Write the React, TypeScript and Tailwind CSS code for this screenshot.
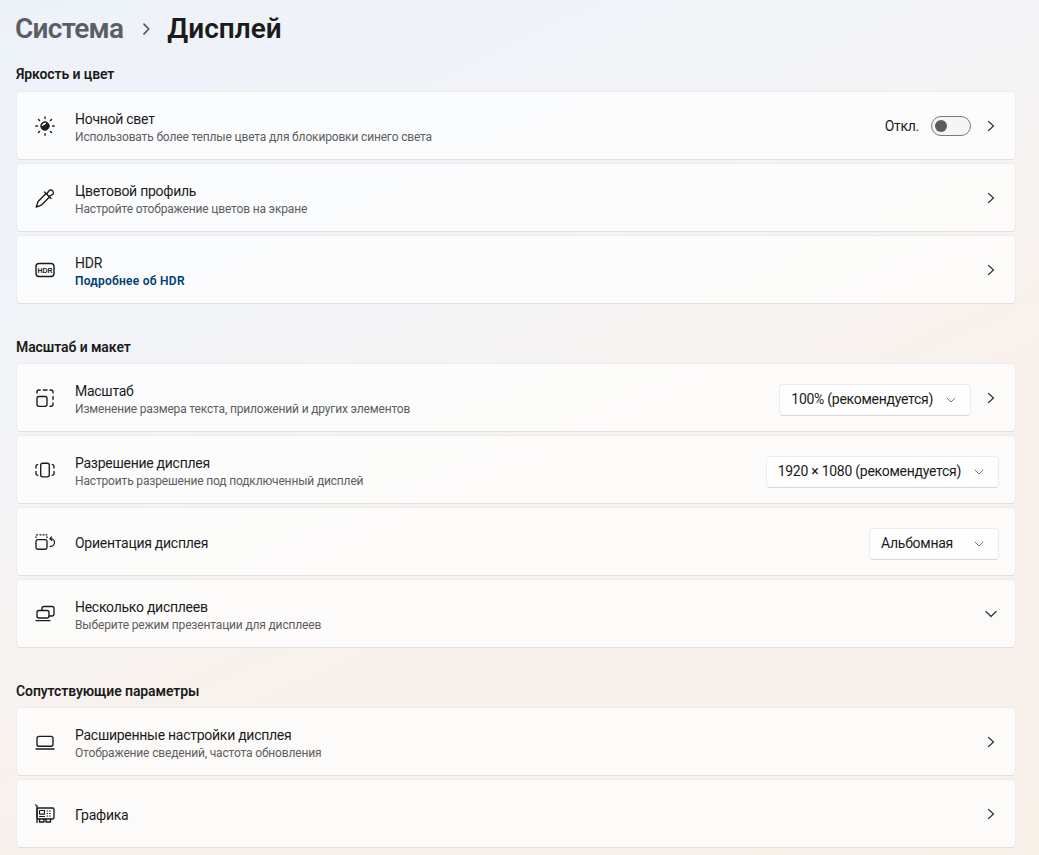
import React from "react";

const S = { fill: "none", stroke: "#1a1a1a", strokeWidth: 1.35, strokeLinecap: "round" as const, strokeLinejoin: "round" as const };

function Ico({ children }: { children: React.ReactNode }) {
  return <svg width="20" height="20" viewBox="0 0 20 20" className="shrink-0" {...S}>{children}</svg>;
}

const Night = () => (
  <Ico>
    <circle cx="10" cy="10" r="4.2" fill="#1f1f1f" strokeWidth="1" />
    <path d="M7.4 9.2A2.8 2.8 0 0 1 10.8 7.3A5 5 0 0 1 7.4 9.2Z" fill="#fff" stroke="#fff" strokeWidth="1" />
    <path d="M10 0.8V2.4M10 17.6V19.2M0.8 10H2.4M17.6 10H19.2M3.4 3.4L4.6 4.6M15.4 15.4L16.6 16.6M3.4 16.6L4.6 15.4M15.4 4.6L16.6 3.4" />
  </Ico>
);
const Dropper = () => (
  <Ico>
    <path d="M11 5.5L3.6 13Q2.8 13.8 2.6 15L1.2 19L5.2 17.6Q6.2 17.2 7 16.5L14.5 9" />
    <path d="M9.5 4L16 10.5" />
    <path d="M12 5.5L14.5 2.2A2.9 2.9 0 0 1 18.2 6L14.6 8.2" />
  </Ico>
);
const Hdr = () => (
  <Ico>
    <rect x="1" y="3.5" width="18" height="13" rx="3" strokeWidth="1.4" />
    <text x="10" y="12.6" textAnchor="middle" fontFamily="'Liberation Sans',sans-serif" fontSize="7" fontWeight="700" fill="#1f1f1f" stroke="none">HDR</text>
  </Ico>
);
const Scale = () => (
  <Ico>
    <rect x="2" y="8.5" width="10" height="9.8" rx="2" />
    <path d="M2 5V4Q2 2 4 2H5.2M8.4 2H12M15 2H16Q18 2 18 4V5M18 8.5V11.5M18 15V16Q18 18.2 16 18.2H15" />
  </Ico>
);
const Res = () => (
  <Ico>
    <rect x="5.7" y="3.2" width="8.6" height="13.6" rx="2" />
    <path d="M2.8 4.6Q1 4.6 1 6.4V8M1 11.4V13.6Q1 15.4 2.8 15.4M17.2 4.6Q19 4.6 19 6.4V8M19 11.4V13.6Q19 15.4 17.2 15.4" />
  </Ico>
);
const Orient = () => (
  <Ico>
    <path d="M2.8 7.6H10.2A1.8 1.8 0 0 1 12 9.4V15.4A1.8 1.8 0 0 1 10.2 17.2H2.8A1.8 1.8 0 0 1 1 15.4V9.4A1.8 1.8 0 0 1 2.8 7.6Z" />
    <path d="M1 5.4V4.8M12 5.4V4.8M1.4 2.8H2.4M5 2.8H6M8 2.8H9M11 2.8H11.8" />
    <path d="M15.2 14.4A3.9 3.9 0 0 0 16 6.6H14.8M16.6 4.8L14.8 6.6L16.6 8.4" strokeWidth="1.2" />
  </Ico>
);
const Multi = () => (
  <Ico>
    <path d="M7 6.5V4.5A2 2 0 0 1 9 2.5H17A2 2 0 0 1 19 4.5V10A2 2 0 0 1 17 12H14" />
    <rect x="2" y="6.5" width="12" height="7.5" rx="2" />
    <path d="M1 16.6H15" />
  </Ico>
);
const Laptop = () => (
  <Ico>
    <rect x="2" y="4.4" width="16" height="9.8" rx="2" />
    <path d="M1 17H19" />
  </Ico>
);
const Gpu = () => (
  <Ico>
    <path d="M0.8 1L2 2V18.4" />
    <rect x="2" y="4" width="17" height="11" rx="1.4" />
    <rect x="4.5" y="6.5" width="5" height="3.6" strokeWidth="1.1" />
    <path d="M4.5 12.5H9.5" strokeWidth="1.1" />
    <path d="M12 7H12.6M14.6 7H15.2M12 9.5H12.6M14.6 9.5H15.2M12 12H12.6M14.6 12H15.2" strokeWidth="1.1" />
    <path d="M4.5 15V18H9V15M11 15V18H15.5V15" />
  </Ico>
);

const ChevronRight = () => (
  <svg width="16" height="16" viewBox="0 0 16 16" className="shrink-0" fill="none" stroke="#333" strokeWidth="1.2" strokeLinecap="round" strokeLinejoin="round">
    <path d="M5.5 3.5L10.5 8L5.5 12.5" />
  </svg>
);
const ChevronDown = () => (
  <svg width="16" height="16" viewBox="0 0 16 16" className="shrink-0" fill="none" stroke="#333" strokeWidth="1.2" strokeLinecap="round" strokeLinejoin="round">
    <path d="M3 5.5L8 10.5L13 5.5" />
  </svg>
);
const SmallDown = () => (
  <svg width="10" height="6" viewBox="0 0 10 6" className="shrink-0" fill="none" stroke="#777" strokeWidth="1" strokeLinecap="round" strokeLinejoin="round">
    <path d="M1 1L5 5L9 1" />
  </svg>
);

function Select({ label, gap }: { label: string; gap: string }) {
  return (
    <div className={`mt-[4px] flex h-[32px] items-center rounded-[4px] border border-[#ececec] border-b-[#d6d6d6] bg-[#fefefe] pl-[11px] pr-[14px] text-[14px] tracking-[-0.27px] text-[#1b1b1b] ${gap}`}>
      <span>{label}</span>
      <SmallDown />
    </div>
  );
}

function Row({ icon, title, sub, link, children, arrow = "right" }: {
  icon: React.ReactNode; title: string; sub?: string; link?: string; children?: React.ReactNode; arrow?: "right" | "down" | "none";
}) {
  return (
    <div className="flex h-[69px] items-center rounded-[4px] border border-[#ecebee] border-b-[#e3e0e0] bg-white/70 pl-[18px] pr-[16px]">
      {icon}
      <div className={`ml-[20px] flex flex-col ${sub || link ? "pt-[4px]" : "pt-[2px]"}`}>
        <div className="text-[14px] leading-[18px] tracking-[-0.27px] text-[#1b1b1b]">{title}</div>
        {sub && <div className="text-[12px] leading-[18px] tracking-[-0.16px] text-[#5d5d5d]">{sub}</div>}
        {link && <div className="text-[12px] font-semibold leading-[18px] tracking-[0.25px] text-[#003e73]">{link}</div>}
      </div>
      <div className="ml-auto flex items-center">
        {children}
        {arrow === "right" && <ChevronRight />}
        {arrow === "down" && <ChevronDown />}
      </div>
    </div>
  );
}

function Section({ title, children, className = "", headClass = "pt-[1px]" }: { title: string; children: React.ReactNode; className?: string; headClass?: string }) {
  return (
    <section className={className}>
      <h2 className={`mb-[7px] h-[20px] text-[14px] font-semibold leading-[20px] tracking-[-0.1px] text-[#1b1b1b] ${headClass}`}>{title}</h2>
      <div className="flex flex-col gap-[3px]">{children}</div>
    </section>
  );
}

export default function App() {
  return (
    <div className="h-[855px] w-[1039px] overflow-hidden bg-[linear-gradient(155deg,#edf2f9_0%,#f3f4f8_32%,#f9f2ec_62%,#f8f1ea_100%)] pl-[16px] pr-[23px] font-['Roboto',sans-serif]">
      <header className="flex h-[64px] items-start pt-[9px] text-[28px] font-semibold leading-[40px]">
        <span className="-ml-[1px] tracking-[-0.7px] text-[#5b5e63]">Система</span>
        <svg width="12" height="12" viewBox="0 0 12 12" className="ml-[18px] mr-[14px] mt-[14px]" fill="none" stroke="#55585c" strokeWidth="1.7" strokeLinecap="round" strokeLinejoin="round">
          <path d="M3 1.2L7.8 6L3 10.8" />
        </svg>
        <span className="text-[#1b1b1b]">Дисплей</span>
      </header>

      <Section title="Яркость и цвет" headClass="pt-0">
        <Row icon={<Night />} title="Ночной свет" sub="Использовать более теплые цвета для блокировки синего света">
          <span className="mt-[2px] text-[14px] tracking-[-0.3px] text-[#1b1b1b]">Откл.</span>
          <div className="ml-[12px] mr-[12px] flex h-[20px] w-[40px] items-center rounded-full border border-[#7a7a7a] bg-[#f5f5f5] pl-[3px]">
            <div className="h-[12px] w-[12px] rounded-full bg-[#5c5c5c]" />
          </div>
        </Row>
        <Row icon={<Dropper />} title="Цветовой профиль" sub="Настройте отображение цветов на экране" />
        <Row icon={<Hdr />} title="HDR" link="Подробнее об HDR" />
      </Section>

      <Section title="Масштаб и макет" className="mt-[32px]">
        <Row icon={<Scale />} title="Масштаб" sub="Изменение размера текста, приложений и других элементов">
          <div className="mr-[12px]"><Select label="100% (рекомендуется)" gap="gap-[13px]" /></div>
        </Row>
        <Row icon={<Res />} title="Разрешение дисплея" sub="Настроить разрешение под подключенный дисплей" arrow="none">
          <Select label="1920 × 1080 (рекомендуется)" gap="gap-[13px]" />
        </Row>
        <Row icon={<Orient />} title="Ориентация дисплея" arrow="none">
          <Select label="Альбомная" gap="gap-[21px]" />
        </Row>
        <Row icon={<Multi />} title="Несколько дисплеев" sub="Выберите режим презентации для дисплеев" arrow="down" />
      </Section>

      <Section title="Сопутствующие параметры" className="mt-[32px]">
        <Row icon={<Laptop />} title="Расширенные настройки дисплея" sub="Отображение сведений, частота обновления" />
        <Row icon={<Gpu />} title="Графика" />
      </Section>
    </div>
  );
}
